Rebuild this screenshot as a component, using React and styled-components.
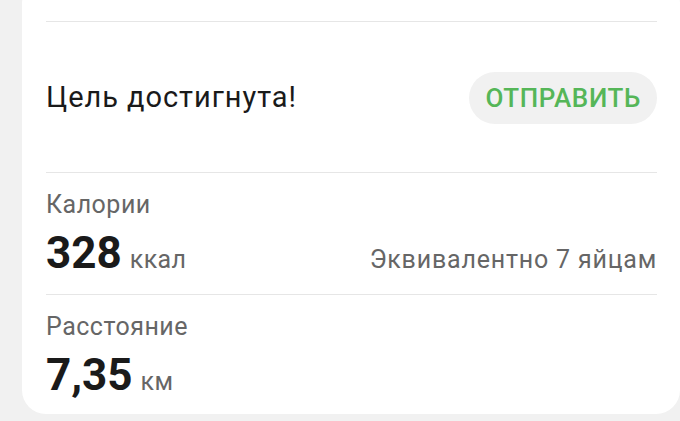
import React from 'react';
import styled, { createGlobalStyle } from 'styled-components';

const GlobalStyle = createGlobalStyle`
  html, body {
    margin: 0;
    padding: 0;
    background: #f1f1f1;
  }
  body {
    font-family: Roboto, "Noto Sans", "Liberation Sans", sans-serif;
    -webkit-font-smoothing: antialiased;
  }
`;

const Page = styled.div`
  width: 680px;
  height: 421px;
  overflow: hidden;
  padding-left: 22px;
  box-sizing: border-box;
`;

const Card = styled.div`
  background: #ffffff;
  margin-top: -20px;
  height: 434px;
  border-radius: 24px;
  padding: 0 23px 0 24px;
  box-sizing: border-box;
  display: flex;
  flex-direction: column;
`;

const Divider = styled.div`
  height: 1px;
  background: #e6e6e6;
  margin-top: ${p => p.$top || 0}px;
`;

const GoalRow = styled.div`
  height: 151px;
  display: flex;
  align-items: center;
  justify-content: space-between;
`;

const GoalText = styled.span`
  font-size: 29px;
  color: #1a1a1a;
  letter-spacing: 0.95px;
`;

const SendButton = styled.button`
  border: none;
  background: #f1f1f1;
  color: #55b658;
  font-family: inherit;
  font-size: 26px;
  font-weight: 500;
  letter-spacing: 0.6px;
  height: 52px;
  padding: 0 16px;
  border-radius: 26px;
  margin-top: 2px;
`;

const Stat = styled.div`
  display: flex;
  flex-direction: column;
  padding-top: ${p => p.$top}px;
  height: ${p => p.$height}px;
  box-sizing: border-box;
`;

const Label = styled.div`
  font-size: 25px;
  color: #666666;
  line-height: 32px;
  letter-spacing: 0.5px;
`;

const ValueRow = styled.div`
  display: flex;
  align-items: baseline;
  justify-content: space-between;
  margin-top: 8px;
`;

const Value = styled.span`
  font-size: 44px;
  font-weight: 700;
  color: #1a1a1a;
  line-height: 48px;
`;

const Unit = styled.span`
  font-size: 25px;
  color: #666666;
  margin-left: 8px;
  letter-spacing: 0.4px;
`;

const Note = styled.span`
  font-size: 25px;
  color: #666666;
  letter-spacing: 0.8px;
`;

export default function App() {
  return (
    <Page>
      <GlobalStyle />
      <Card>
        <Divider $top={41} />
        <GoalRow>
          <GoalText>Цель достигнута!</GoalText>
          <SendButton>ОТПРАВИТЬ</SendButton>
        </GoalRow>
        <Divider />
        <Stat $top={16} $height={121}>
          <Label>Калории</Label>
          <ValueRow>
            <span>
              <Value>328</Value>
              <Unit>ккал</Unit>
            </span>
            <Note>Эквивалентно 7 яйцам</Note>
          </ValueRow>
        </Stat>
        <Divider />
        <Stat $top={16} $height={120}>
          <Label>Расстояние</Label>
          <ValueRow>
            <span>
              <Value>7,35</Value>
              <Unit>км</Unit>
            </span>
          </ValueRow>
        </Stat>
      </Card>
    </Page>
  );
}
